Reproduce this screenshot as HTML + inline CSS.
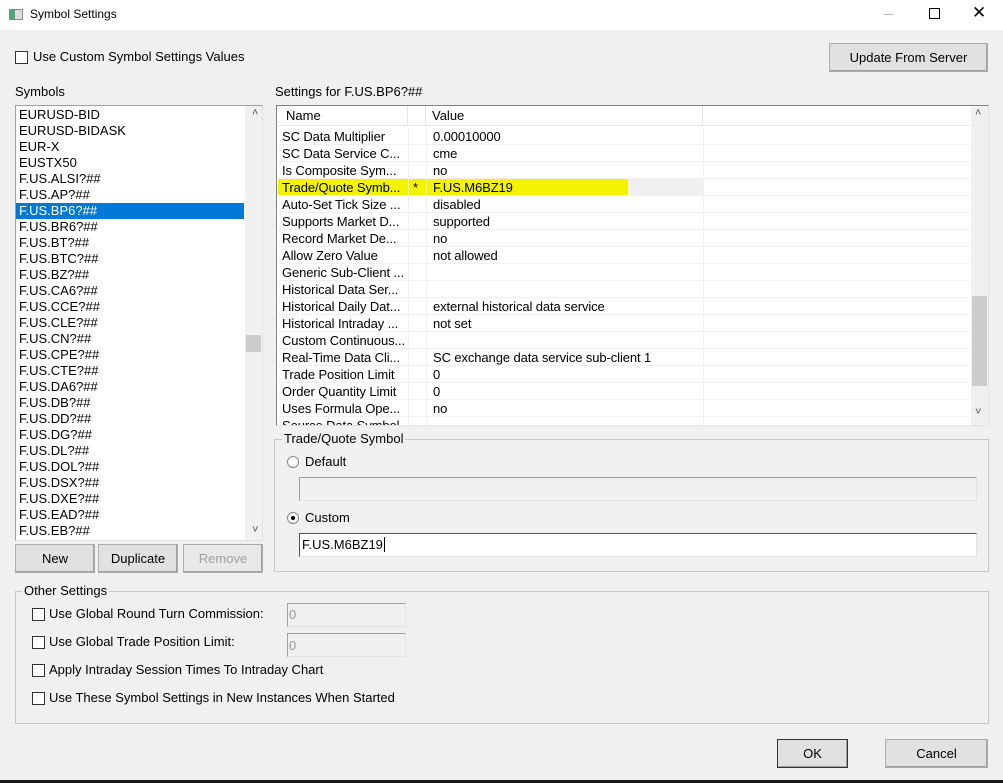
<!DOCTYPE html>
<html><head><style>
*{box-sizing:border-box;margin:0;padding:0}
body{width:1003px;height:783px;background:#f0f0f0;font-family:"Liberation Sans",sans-serif;font-size:13px;color:#000;position:relative;overflow:hidden}
.a{position:absolute;white-space:nowrap}
.btn{position:absolute;background:#e1e1e1;border:1px solid #adadad;box-shadow:inset -1px -1px 0 #a0a0a0;text-align:center;font-size:13px}
.cb{position:absolute;width:13px;height:13px;border:1px solid #333;background:#fff}
.list div{height:16px;line-height:16px;padding-left:3px;font-size:13px}
.g{position:absolute;border:1px solid #c8c8c8}
.grid .r{position:absolute;left:0;width:692px;height:17px;border-bottom:1px solid #f0f0f0;font-size:13px;letter-spacing:-0.1px;line-height:17px}
.grid .r span{position:absolute;top:0}
.in{position:absolute;border:1px solid #a0a0a0;border-right-color:#e3e3e3;border-bottom-color:#e3e3e3}
</style></head><body>
<div class="a" style="left:0;top:0;width:1003px;height:30px;background:#fff"></div>
<div class="a" style="left:9px;top:9px;width:14px;height:11px;border:1px solid #888;background:linear-gradient(90deg,#4a7 0 40%,#ddd 40%)"></div>
<div class="a" style="left:30px;top:7px;font-size:12px">Symbol Settings</div>
<div class="a" style="left:884px;top:14px;width:10px;height:1px;background:#bbb"></div>
<div class="a" style="left:929px;top:8px;width:11px;height:11px;border:1px solid #000"></div>
<div class="a" style="left:972px;top:3px;font-size:17px">✕</div>

<div class="cb" style="left:15px;top:51px"></div>
<div class="a" style="left:33px;top:49px">Use Custom Symbol Settings Values</div>
<div class="btn" style="left:829px;top:43px;width:159px;height:29px;line-height:27px">Update From Server</div>

<div class="a" style="left:15px;top:84px">Symbols</div>
<div class="a" style="left:275px;top:84px">Settings for F.US.BP6?##</div>

<div class="a list" style="left:15px;top:105px;width:248px;height:436px;background:#fff;border:1px solid #a0a0a0;border-right-color:#e3e3e3;border-bottom-color:#e3e3e3;padding-top:1px">
<div>EURUSD-BID</div><div>EURUSD-BIDASK</div><div>EUR-X</div><div>EUSTX50</div><div>F.US.ALSI?##</div><div>F.US.AP?##</div><div style="background:#0078d7;color:#fff;width:228px">F.US.BP6?##</div><div>F.US.BR6?##</div><div>F.US.BT?##</div><div>F.US.BTC?##</div><div>F.US.BZ?##</div><div>F.US.CA6?##</div><div>F.US.CCE?##</div><div>F.US.CLE?##</div><div>F.US.CN?##</div><div>F.US.CPE?##</div><div>F.US.CTE?##</div><div>F.US.DA6?##</div><div>F.US.DB?##</div><div>F.US.DD?##</div><div>F.US.DG?##</div><div>F.US.DL?##</div><div>F.US.DOL?##</div><div>F.US.DSX?##</div><div>F.US.DXE?##</div><div>F.US.EAD?##</div><div>F.US.EB?##</div>
<div class="a" style="left:229px;top:0;width:17px;height:434px;background:#f0f0f0"></div>
<div class="a" style="left:230px;top:229px;width:15px;height:17px;background:#cdcdcd"></div>
<div class="a" style="left:233px;top:-1px;font-size:11px;color:#555">˄</div>
<div class="a" style="left:233px;top:416px;font-size:11px;color:#555">˅</div>
</div>

<div class="btn" style="left:15px;top:544px;width:80px;height:29px;line-height:27px">New</div>
<div class="btn" style="left:98px;top:544px;width:80px;height:29px;line-height:27px">Duplicate</div>
<div class="btn" style="left:183px;top:544px;width:80px;height:29px;line-height:27px;color:#a0a0a0;background:#e8e8e8">Remove</div>

<div class="a grid" style="left:276px;top:105px;width:713px;height:321px;background:#fff;border:1px solid #828282;border-right-color:#e3e3e3;border-bottom-color:#e3e3e3;overflow:hidden">
<div class="a" style="left:0;top:0;width:694px;height:20px;border-bottom:1px solid #e5e5e5;font-size:13px;line-height:20px">
<span class="a" style="left:9px">Name</span><span class="a" style="left:130px;top:0;width:1px;height:20px;background:#e5e5e5"></span><span class="a" style="left:148px;top:0;width:1px;height:20px;background:#e5e5e5"></span><span class="a" style="left:155px">Value</span><span class="a" style="left:425px;top:0;width:1px;height:20px;background:#e5e5e5"></span></div>
<div class="a" style="left:1px;top:22px;width:692px;height:300px">
<div class="r" style="top:0"><span style="left:4px">SC Data Multiplier</span><span style="left:155px">0.00010000</span></div>
<div class="r" style="top:17px"><span style="left:4px">SC Data Service C...</span><span style="left:155px">cme</span></div>
<div class="r" style="top:34px"><span style="left:4px">Is Composite Sym...</span><span style="left:155px">no</span></div>
<div class="r" style="top:51px;background:linear-gradient(90deg,#f3f300 0 350px,#f0f0f0 350px 425px,#fff 425px)"><span style="left:4px">Trade/Quote Symb...</span><span style="left:135px">*</span><span style="left:155px">F.US.M6BZ19</span></div>
<div class="r" style="top:68px"><span style="left:4px">Auto-Set Tick Size ...</span><span style="left:155px">disabled</span></div>
<div class="r" style="top:85px"><span style="left:4px">Supports Market D...</span><span style="left:155px">supported</span></div>
<div class="r" style="top:102px"><span style="left:4px">Record Market De...</span><span style="left:155px">no</span></div>
<div class="r" style="top:119px"><span style="left:4px">Allow Zero Value</span><span style="left:155px">not allowed</span></div>
<div class="r" style="top:136px"><span style="left:4px">Generic Sub-Client ...</span></div>
<div class="r" style="top:153px"><span style="left:4px">Historical Data Ser...</span></div>
<div class="r" style="top:170px"><span style="left:4px">Historical Daily Dat...</span><span style="left:155px">external historical data service</span></div>
<div class="r" style="top:187px"><span style="left:4px">Historical Intraday ...</span><span style="left:155px">not set</span></div>
<div class="r" style="top:204px"><span style="left:4px">Custom Continuous...</span></div>
<div class="r" style="top:221px"><span style="left:4px">Real-Time Data Cli...</span><span style="left:155px">SC exchange data service sub-client 1</span></div>
<div class="r" style="top:238px"><span style="left:4px">Trade Position Limit</span><span style="left:155px">0</span></div>
<div class="r" style="top:255px"><span style="left:4px">Order Quantity Limit</span><span style="left:155px">0</span></div>
<div class="r" style="top:272px"><span style="left:4px">Uses Formula Ope...</span><span style="left:155px">no</span></div>
<div class="r" style="top:289px"><span style="left:4px">Source Data Symbol</span></div>
<div class="a" style="left:130px;top:0;width:1px;height:300px;background:#f0f0f0"></div>
<div class="a" style="left:148px;top:0;width:1px;height:300px;background:#f0f0f0"></div>
<div class="a" style="left:425px;top:0;width:1px;height:300px;background:#f0f0f0"></div>
</div>
<div class="a" style="left:694px;top:0;width:17px;height:320px;background:#f0f0f0"></div>
<div class="a" style="left:695px;top:190px;width:15px;height:90px;background:#cdcdcd"></div>
<div class="a" style="left:698px;top:1px;font-size:11px;color:#555">˄</div>
<div class="a" style="left:698px;top:300px;font-size:11px;color:#555">˅</div>
</div>

<div class="g" style="left:274px;top:439px;width:715px;height:133px"></div>
<div class="a" style="left:282px;top:431px;background:#f0f0f0;padding:0 2px;font-size:13px">Trade/Quote Symbol</div>
<div class="a" style="left:287px;top:456px;width:12px;height:12px;border-radius:50%;border:1px solid #888;background:#fff"></div>
<div class="a" style="left:305px;top:454px;font-size:13px">Default</div>
<div class="in" style="left:299px;top:477px;width:678px;height:24px;background:#f0f0f0"></div>
<div class="a" style="left:287px;top:512px;width:12px;height:12px;border-radius:50%;border:1px solid #888;background:#fff"><div class="a" style="left:3px;top:3px;width:4px;height:4px;border-radius:50%;background:#000"></div></div>
<div class="a" style="left:305px;top:510px;font-size:13px">Custom</div>
<div class="in" style="left:299px;top:533px;width:678px;height:24px;background:#fff;border-color:#555 #e3e3e3 #e3e3e3 #555"></div>
<div class="a" style="left:302px;top:537px;font-size:13px">F.US.M6BZ19<span style="border-left:1px solid #000;margin-left:1px"></span></div>

<div class="g" style="left:15px;top:591px;width:974px;height:133px"></div>
<div class="a" style="left:22px;top:583px;background:#f0f0f0;padding:0 2px">Other Settings</div>
<div class="cb" style="left:32px;top:608px"></div><div class="a" style="left:49px;top:606px">Use Global Round Turn Commission:</div>
<div class="in" style="left:287px;top:603px;width:119px;height:24px;color:#999;padding:3px 1px">0</div>
<div class="cb" style="left:32px;top:636px"></div><div class="a" style="left:49px;top:634px">Use Global Trade Position Limit:</div>
<div class="in" style="left:287px;top:633px;width:119px;height:24px;color:#999;padding:4px 1px">0</div>
<div class="cb" style="left:32px;top:664px"></div><div class="a" style="left:49px;top:662px">Apply Intraday Session Times To Intraday Chart</div>
<div class="cb" style="left:32px;top:692px"></div><div class="a" style="left:49px;top:690px">Use These Symbol Settings in New Instances When Started</div>

<div class="btn" style="left:777px;top:739px;width:71px;height:29px;line-height:27px;border-color:#333">OK</div>
<div class="btn" style="left:885px;top:739px;width:103px;height:29px;line-height:27px">Cancel</div>
<div class="a" style="left:0;top:780px;width:1003px;height:3px;background:#1a1a1a"></div>
</body></html>
